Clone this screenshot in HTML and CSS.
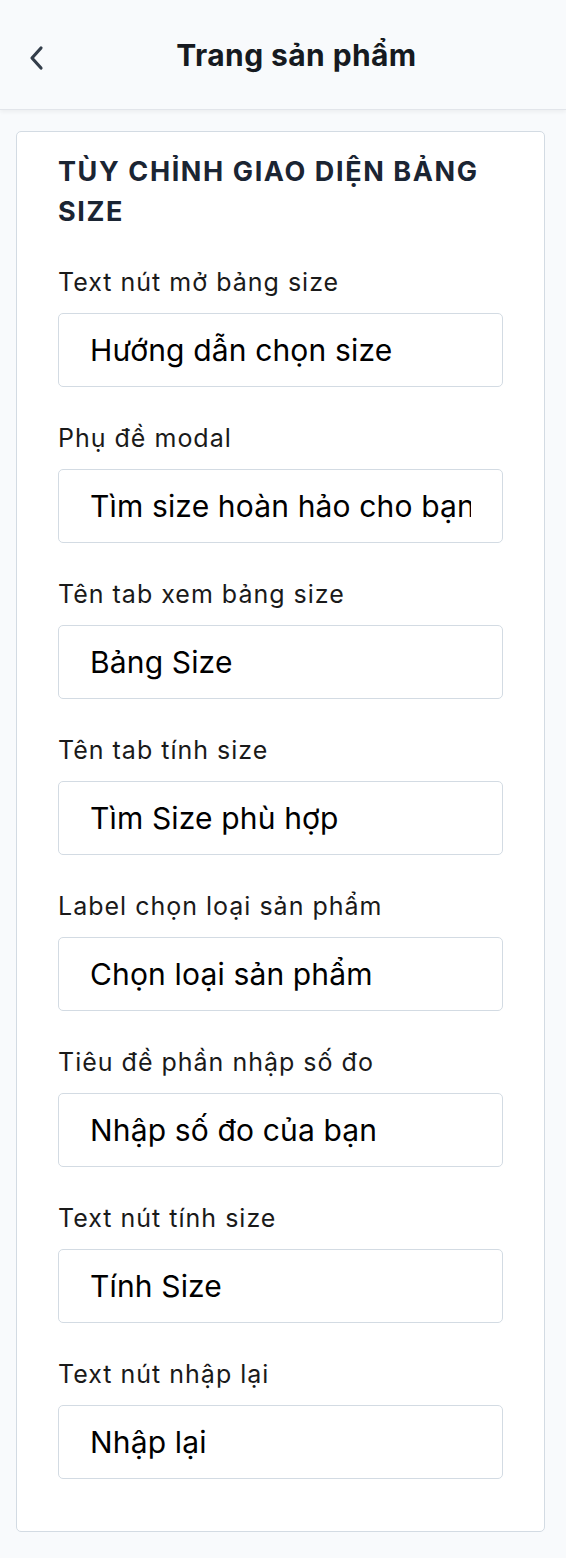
FILE: index.html
```html
<!DOCTYPE html>
<html lang="vi">
<head>
<meta charset="utf-8">
<title>Trang sản phẩm</title>
<link rel="stylesheet" href="styles.css">
</head>
<body>
<header class="topbar">
  <button class="back" aria-label="Quay lại">
    <svg width="18" height="26" viewBox="0 0 18 26"><path d="M14 3 L5 13 L14 23" fill="none" stroke="#333d4a" stroke-width="3.2" stroke-linecap="round" stroke-linejoin="round"/></svg>
  </button>
  <h1 class="title">Trang sản phẩm</h1>
</header>
<main class="page">
  <section class="card">
    <h2 class="card-title">TÙY CHỈNH GIAO DIỆN BẢNG SIZE</h2>
    <div class="field"><label class="label">Text nút mở bảng size</label><input class="input" type="text" value="Hướng dẫn chọn size"></div>
    <div class="field"><label class="label">Phụ đề modal</label><input class="input" type="text" value="Tìm size hoàn hảo cho bạn"></div>
    <div class="field"><label class="label">Tên tab xem bảng size</label><input class="input" type="text" value="Bảng Size"></div>
    <div class="field"><label class="label">Tên tab tính size</label><input class="input" type="text" value="Tìm Size phù hợp"></div>
    <div class="field"><label class="label">Label chọn loại sản phẩm</label><input class="input" type="text" value="Chọn loại sản phẩm"></div>
    <div class="field"><label class="label">Tiêu đề phần nhập số đo</label><input class="input" type="text" value="Nhập số đo của bạn"></div>
    <div class="field"><label class="label">Text nút tính size</label><input class="input" type="text" value="Tính Size"></div>
    <div class="field"><label class="label">Text nút nhập lại</label><input class="input" type="text" value="Nhập lại"></div>
  </section>
</main>
</body>
</html>
```
FILE: styles.css
```css
* { box-sizing: border-box; }
html, body { margin: 0; padding: 0; }
body {
  background: #f8fafc;
  font-family: Inter, "Noto Sans", "Liberation Sans", sans-serif;
  color: #111;
  width: 566px;
  height: 1558px;
  overflow: hidden;
}
.topbar {
  height: 110px;
  display: flex;
  align-items: center;
  padding: 0 29px 0 16px;
  background: #f8fafc;
  border-bottom: 1px solid #e2e5ea;
  box-shadow: 0 2px 4px rgba(0,0,0,0.05);
}
.back {
  width: 40px;
  height: 40px;
  display: flex;
  align-items: center;
  justify-content: center;
  background: none;
  border: 0;
  padding: 0;
  margin-top: 6px;
}
.title {
  flex: 1;
  margin: 0;
  text-align: center;
  font-size: 30px;
  font-weight: 700;
  letter-spacing: 0.4px;
  color: #161a20;
}
.page { padding: 21px 21px 27px 16px; }
.card {
  background: #fff;
  border: 1.5px solid #d3dbe3;
  border-radius: 5px;
  padding: 20px 41px 52px 41px;
}
.card-title {
  margin: 0 0 32px;
  font-size: 27px;
  line-height: 40px;
  font-weight: 700;
  letter-spacing: 1.6px;
  color: #1b2533;
}
.field { margin-bottom: 33px; }
.field:last-child { margin-bottom: 0; }
.label {
  display: block;
  font-size: 25px;
  line-height: 36px;
  letter-spacing: 1px;
  margin-bottom: 13px;
  color: #1a1a1a;
}
.input {
  display: block;
  width: 100%;
  height: 74px;
  margin: 0;
  border: 1.5px solid #d3dbe3;
  border-radius: 5px;
  padding: 0 31px;
  background: #fff;
  font-family: Inter, "Noto Sans", "Liberation Sans", sans-serif;
  font-size: 30px;
  letter-spacing: 0.15px;
  color: #000;
  outline: none;
}
```
